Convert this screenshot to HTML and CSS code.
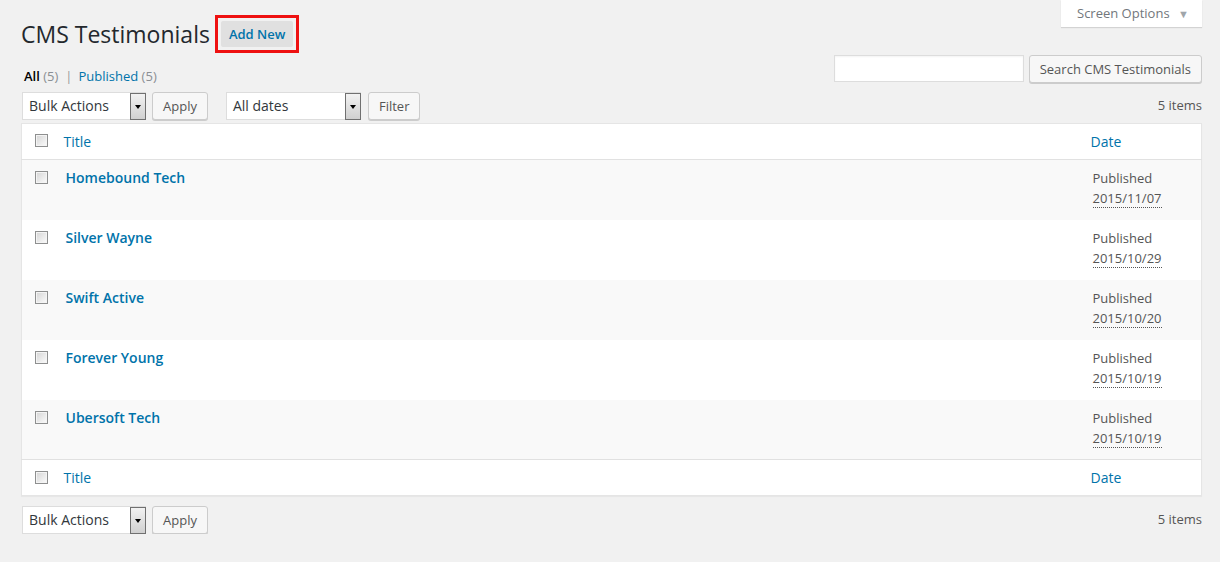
FILE: index.html
```html
<!DOCTYPE html>
<html lang="en">
<head>
    <meta charset="UTF-8">
    <title>CMS Testimonials</title>
    <link rel="stylesheet" href="styles.css">
</head>
<body>
<div class="wrap">

    <!-- header: title + screen options -->
    <div class="page-head">
        <h1 class="page-title">
            CMS Testimonials
            <span class="highlight"><a href="#" class="add-new">Add New</a></span>
        </h1>
        <a href="#" class="screen-tab">Screen Options <span class="tab-arrow">&#9660;</span></a>
    </div>

    <!-- views + search -->
    <div class="views-row">
        <ul class="views">
            <li><a href="#" class="current">All <span class="count">(5)</span></a></li>
            <li class="sep">|</li>
            <li><a href="#">Published <span class="count">(5)</span></a></li>
        </ul>
        <form class="search-box">
            <input type="search" class="search-input">
            <button type="button" class="button">Search CMS Testimonials</button>
        </form>
    </div>

    <div class="tablenav top">
        <div class="fake-select bulk"><span>Bulk Actions</span><i class="drop"></i></div>
        <button type="button" class="button">Apply</button>
        <div class="fake-select dates"><span>All dates</span><i class="drop"></i></div>
        <button type="button" class="button">Filter</button>
        <span class="num-items">5 items</span>
    </div>

    <table class="list-table">
        <colgroup>
            <col class="col-cb">
            <col>
            <col class="col-date">
        </colgroup>
        <thead>
            <tr>
                <td class="cb"><span class="check"></span></td>
                <th class="col-title"><a href="#">Title</a></th>
                <th class="col-datehead"><a href="#">Date</a></th>
            </tr>
        </thead>
        <tbody>
            <tr class="alt">
                <td class="cb"><span class="check"></span></td>
                <td class="row-title"><a href="#">Homebound Tech</a></td>
                <td class="row-date">Published<br><abbr>2015/11/07</abbr></td>
            </tr>
            <tr>
                <td class="cb"><span class="check"></span></td>
                <td class="row-title"><a href="#">Silver Wayne</a></td>
                <td class="row-date">Published<br><abbr>2015/10/29</abbr></td>
            </tr>
            <tr class="alt">
                <td class="cb"><span class="check"></span></td>
                <td class="row-title"><a href="#">Swift Active</a></td>
                <td class="row-date">Published<br><abbr>2015/10/20</abbr></td>
            </tr>
            <tr>
                <td class="cb"><span class="check"></span></td>
                <td class="row-title"><a href="#">Forever Young</a></td>
                <td class="row-date">Published<br><abbr>2015/10/19</abbr></td>
            </tr>
            <tr class="alt">
                <td class="cb"><span class="check"></span></td>
                <td class="row-title"><a href="#">Ubersoft Tech</a></td>
                <td class="row-date">Published<br><abbr>2015/10/19</abbr></td>
            </tr>
        </tbody>
        <tfoot>
            <tr>
                <td class="cb"><span class="check"></span></td>
                <th class="col-title"><a href="#">Title</a></th>
                <th class="col-datehead"><a href="#">Date</a></th>
            </tr>
        </tfoot>
    </table>

    <div class="tablenav bottom">
        <div class="fake-select bulk"><span>Bulk Actions</span><i class="drop"></i></div>
        <button type="button" class="button">Apply</button>
        <span class="num-items">5 items</span>
    </div>

</div>
</body>
</html>
```

FILE: styles.css
```css
body {
    margin: 0;
    background-color: #f1f1f1;
    font-family: "Open Sans", "Liberation Sans", sans-serif;
    font-size: 13px;
    color: #444;
}

a {
    color: #0073aa;
    text-decoration: none;
}

.wrap {
    margin: 0 18px 0 21px;
}

/* header */
.page-head {
    display: flex;
    justify-content: space-between;
    align-items: flex-start;
    height: 55px;
}

.page-title {
    display: flex;
    align-items: center;
    margin: 0;
    padding-top: 15px;
    font-size: 23px;
    font-weight: 400;
    line-height: 29px;
    color: #23282d;
}

.highlight {
    margin-left: 5px;
    padding: 3px;
    border: 3px solid #ee1111;
}

.add-new {
    display: block;
    padding: 4px 8px;
    background-color: #e0e0e0;
    border-radius: 2px;
    font-size: 13px;
    font-weight: 600;
    line-height: 18px;
}

.screen-tab {
    display: block;
    width: 141px;
    height: 27px;
    box-sizing: border-box;
    padding: 4px 0 0 16px;
    background-color: #fff;
    box-shadow: 0 1px 1px rgba(0, 0, 0, 0.12);
    color: #72777c;
    font-size: 13px;
    line-height: 18px;
}

.tab-arrow {
    margin-left: 5px;
    font-size: 11px;
    color: #a0a5aa;
}

/* views + search */
.views-row {
    display: flex;
    justify-content: space-between;
    height: 28px;
}

.views {
    display: flex;
    gap: 6px;
    list-style: none;
    margin: 0;
    padding: 12px 0 0 3px;
    line-height: 18px;
}

.views .current {
    color: #000;
    font-weight: 600;
}

.views .count {
    color: #8a8f94;
    font-weight: 400;
}

.views .sep {
    color: #999;
    padding-left: 1px;
}

.search-box {
    display: flex;
    gap: 5px;
    margin: 0;
}

.search-input {
    width: 190px;
    height: 27px;
    box-sizing: border-box;
    margin: 0;
    border: 1px solid #ddd;
    background-color: #fff;
    box-shadow: inset 0 1px 2px rgba(0, 0, 0, 0.05);
}

.button {
    height: 28px;
    box-sizing: border-box;
    margin: 0;
    padding: 0 10px 1px;
    border: 1px solid #ccc;
    border-radius: 3px;
    background-color: #f7f7f7;
    box-shadow: 0 1px 0 #ccc;
    font-family: "Open Sans", "Liberation Sans", sans-serif;
    font-size: 13px;
    line-height: 26px;
    color: #555;
}

/* tablenav */
.tablenav {
    display: flex;
    align-items: flex-start;
    height: 28px;
}

.tablenav.top {
    margin: 9px 0 3px;
}

.tablenav.bottom {
    margin-top: 10px;
}

.fake-select {
    display: flex;
    height: 28px;
    box-sizing: border-box;
    border: 1px solid #ddd;
    background-color: #fff;
    font-size: 14px;
    line-height: 26px;
    color: #32373c;
}

.fake-select span {
    flex: 1;
    padding-left: 6px;
}

.fake-select.bulk {
    width: 124px;
    margin: 0 6px 0 1px;
}

.fake-select.dates {
    width: 135px;
    margin: 0 7px 0 18px;
}

.drop {
    position: relative;
    width: 16px;
    margin: 0 -1px -1px 0;
    box-sizing: border-box;
    border: 1px solid #707070;
    background: linear-gradient(#f2f2f2, #d0d0d0);
}

.drop::after {
    content: "";
    position: absolute;
    left: 4px;
    top: 11px;
    border-left: 3px solid transparent;
    border-right: 3px solid transparent;
    border-top: 4px solid #000;
}

.num-items {
    margin-left: auto;
    padding-top: 4px;
    line-height: 18px;
    color: #555;
}

/* list table */
.list-table {
    width: 100%;
    table-layout: fixed;
    border-collapse: collapse;
    border: 1px solid #e5e5e5;
    background-color: #fff;
    box-shadow: 0 1px 1px rgba(0, 0, 0, 0.04);
}

.col-cb {
    width: 32px;
}

.col-date {
    width: 121px;
}

.list-table td,
.list-table th {
    padding: 0;
    text-align: left;
    vertical-align: top;
    font-weight: 400;
}

.list-table thead tr {
    border-bottom: 1px solid #e1e1e1;
}

.list-table tfoot tr {
    border-top: 1px solid #e1e1e1;
}

.list-table thead th,
.list-table tfoot th {
    height: 36px;
    box-sizing: border-box;
    padding: 8px 10px 0;
    font-size: 14px;
    line-height: 20px;
}

.list-table tbody tr {
    height: 60px;
}

.list-table tbody tr.alt {
    background-color: #f9f9f9;
}

.list-table .cb {
    padding-left: 13px;
}

thead .check {
    margin-top: 10px;
}

tbody .check,
tfoot .check {
    margin-top: 11px;
}

.check {
    display: block;
    width: 13px;
    height: 13px;
    box-sizing: border-box;
    border: 1px solid #8e8f8f;
    background: linear-gradient(135deg, #d4d4d4, #fcfcfc);
    box-shadow: inset 0 0 0 1px #f4f4f4;
}

.list-table .row-title {
    padding: 8px 12px 0;
    font-size: 14px;
    font-weight: 600;
    line-height: 19px;
}

.list-table .row-date {
    padding: 8px 12px 0;
    line-height: 20px;
    color: #555;
}

.row-date abbr {
    text-decoration: none;
    border-bottom: 1px dotted #555;
}
```
